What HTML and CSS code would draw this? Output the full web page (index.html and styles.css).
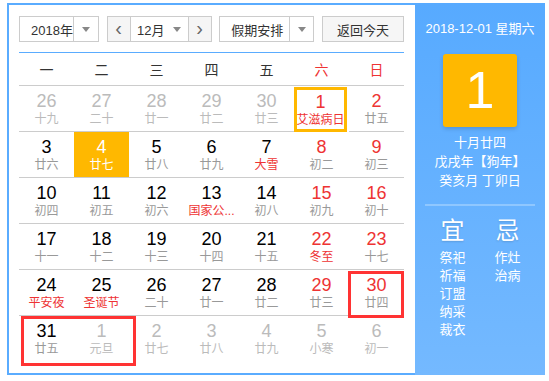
FILE: index.html
```html
<!DOCTYPE html>
<html lang="zh-CN">
<head>
    <meta charset="UTF-8">
    <title>万年历</title>
    <link rel="stylesheet" href="styles.css">
</head>
<body>
    <div class="calendar">
        <div class="main">
            <!-- Toolbar -->
            <div class="toolbar">
                <div class="select year">
                    <span class="label">2018年</span>
                    <span class="arrow"><i class="caret"></i></span>
                </div>
                <div class="month-group">
                    <span class="nav">&lsaquo;</span>
                    <span class="month">12月 <i class="caret"></i></span>
                    <span class="nav">&rsaquo;</span>
                </div>
                <div class="select holiday">
                    <span class="label">假期安排</span>
                    <span class="arrow"><i class="caret"></i></span>
                </div>
                <button class="today-btn">返回今天</button>
            </div>

            <!-- Week header -->
            <div class="week">
                <span>一</span><span>二</span><span>三</span><span>四</span><span>五</span>
                <span class="red">六</span><span class="red">日</span>
            </div>

            <!-- Days -->
            <div class="days">
                <div class="day other"><b>26</b><em>十九</em></div>
                <div class="day other"><b>27</b><em>二十</em></div>
                <div class="day other"><b>28</b><em>廿一</em></div>
                <div class="day other"><b>29</b><em>廿二</em></div>
                <div class="day other"><b>30</b><em>廿三</em></div>
                <div class="day weekend selected"><b>1</b><em class="fest">艾滋病日</em></div>
                <div class="day weekend"><b>2</b><em>廿五</em></div>

                <div class="day"><b>3</b><em>廿六</em></div>
                <div class="day today"><b>4</b><em>廿七</em></div>
                <div class="day"><b>5</b><em>廿八</em></div>
                <div class="day"><b>6</b><em>廿九</em></div>
                <div class="day"><b>7</b><em class="fest">大雪</em></div>
                <div class="day weekend"><b>8</b><em>初二</em></div>
                <div class="day weekend"><b>9</b><em>初三</em></div>

                <div class="day"><b>10</b><em>初四</em></div>
                <div class="day"><b>11</b><em>初五</em></div>
                <div class="day"><b>12</b><em>初六</em></div>
                <div class="day"><b>13</b><em class="fest" title="国家公祭日">国家公...</em></div>
                <div class="day"><b>14</b><em>初八</em></div>
                <div class="day weekend"><b>15</b><em>初九</em></div>
                <div class="day weekend"><b>16</b><em>初十</em></div>

                <div class="day"><b>17</b><em>十一</em></div>
                <div class="day"><b>18</b><em>十二</em></div>
                <div class="day"><b>19</b><em>十三</em></div>
                <div class="day"><b>20</b><em>十四</em></div>
                <div class="day"><b>21</b><em>十五</em></div>
                <div class="day weekend"><b>22</b><em class="fest">冬至</em></div>
                <div class="day weekend"><b>23</b><em>十七</em></div>

                <div class="day"><b>24</b><em class="fest">平安夜</em></div>
                <div class="day"><b>25</b><em class="fest">圣诞节</em></div>
                <div class="day"><b>26</b><em>二十</em></div>
                <div class="day"><b>27</b><em>廿一</em></div>
                <div class="day"><b>28</b><em>廿二</em></div>
                <div class="day weekend"><b>29</b><em>廿三</em></div>
                <div class="day weekend"><b>30</b><em>廿四</em></div>

                <div class="day last"><b>31</b><em>廿五</em></div>
                <div class="day last other"><b>1</b><em>元旦</em></div>
                <div class="day last other"><b>2</b><em>廿七</em></div>
                <div class="day last other"><b>3</b><em>廿八</em></div>
                <div class="day last other"><b>4</b><em>廿九</em></div>
                <div class="day last other"><b>5</b><em>小寒</em></div>
                <div class="day last other"><b>6</b><em>初一</em></div>
            </div>
        </div>

        <!-- Side panel -->
        <div class="side">
            <div class="side-date">2018-12-01 星期六</div>
            <div class="big-day">1</div>
            <div class="lunar">
                <p>十月廿四</p>
                <p>戊戌年【狗年】</p>
                <p>癸亥月 丁卯日</p>
            </div>
            <div class="divider"></div>
            <div class="almanac">
                <div class="col">
                    <h3>宜</h3>
                    <p>祭祀</p><p>祈福</p><p>订盟</p><p>纳采</p><p>裁衣</p>
                </div>
                <div class="col">
                    <h3>忌</h3>
                    <p>作灶</p><p>治病</p>
                </div>
            </div>
        </div>

        <!-- Red marks drawn over the grid -->
        <div class="mark mark-a"></div>
        <div class="mark mark-b"></div>
    </div>
</body>
</html>
```

FILE: styles.css
```css
* {
    box-sizing: border-box;
    margin: 0;
    padding: 0;
}

body {
    font-family: "Liberation Sans", "Noto Sans CJK SC", sans-serif;
    background: #fff;
    color: #333;
}

.calendar {
    position: relative;
    display: flex;
    width: 538px;
    height: 372px;
    margin: 3px 0 0 7px;
}

/* Left part */
.main {
    width: 408px;
    border: 2px solid #5aacff;
    border-right: none;
    padding: 11px 11px 0 10px;
}

.toolbar {
    display: flex;
    justify-content: space-between;
    height: 26px;
    margin-bottom: 10px;
    font-size: 13px;
}

.select {
    display: flex;
    border: 1px solid #ccc;
    background: #fff;
}

.select .label {
    display: flex;
    align-items: center;
    padding-left: 11px;
    border-right: 1px solid #ccc;
}

.select .arrow {
    display: flex;
    align-items: center;
    justify-content: center;
    width: 24px;
}

.year { width: 80px; }
.year .label { width: 55px; }

.holiday { width: 95px; }
.holiday .label { width: 71px; }

.caret {
    display: inline-block;
    width: 0;
    height: 0;
    border-left: 4px solid transparent;
    border-right: 4px solid transparent;
    border-top: 5px solid #888;
}

.month-group {
    display: flex;
    width: 105px;
    border: 1px solid #ccc;
}

.month-group .nav {
    display: flex;
    align-items: center;
    justify-content: center;
    width: 22px;
    background: #f5f5f5;
    color: #666;
    font-size: 20px;
    line-height: 1;
    padding-bottom: 3px;
}

.month-group .month {
    display: flex;
    align-items: center;
    justify-content: center;
    gap: 9px;
    width: 59px;
    border-left: 1px solid #ccc;
    border-right: 1px solid #ccc;
}

.today-btn {
    width: 82px;
    border: 1px solid #ccc;
    background: #f6f6f6;
    font-family: inherit;
    font-size: 13px;
    color: #333;
}

.week {
    display: grid;
    grid-template-columns: repeat(7, 55px);
    height: 34px;
    border-top: 1px solid #5aacff;
    border-bottom: 1px solid #ccc;
    font-size: 14px;
    color: #333;
}

.week span {
    display: flex;
    align-items: center;
    justify-content: center;
}

.week .red { color: #e33; }

.days {
    display: grid;
    grid-template-columns: repeat(7, 55px);
}

.day {
    display: flex;
    flex-direction: column;
    align-items: center;
    height: 46px;
    padding-top: 5px;
    border-bottom: 1px solid #ccc;
}

.day.last { border-bottom: none; }

.day b {
    font-weight: normal;
    font-size: 18px;
    line-height: 20px;
    color: #000;
}

.day em {
    font-style: normal;
    font-size: 12px;
    line-height: 16px;
    color: #999;
    white-space: nowrap;
}

.day.weekend b { color: #e33; }
.day em.fest { color: #e33; }

.day.other b { color: #bbb; }
.day.other em { color: #bbb; }

.day.today { background: #ffb800; }
.day.today b,
.day.today em { color: #fff; }

.day.selected {
    outline: 3px solid #ffb800;
    outline-offset: -3px;
    margin-right: 2px;
    height: 45px;
    margin-top: 1px;
}

/* Right panel */
.side {
    width: 130px;
    background: linear-gradient(#57aaff, #74b9ff);
    color: #fff;
    text-align: center;
    padding-top: 16px;
}

.side-date {
    font-size: 13px;
    line-height: 20px;
}

.big-day {
    width: 74px;
    height: 73px;
    margin: 15px auto 0;
    background: #ffb800;
    border-radius: 3px;
    box-shadow: 0 2px 4px rgba(0, 0, 0, 0.15);
    font-size: 52px;
    line-height: 73px;
}

.lunar {
    margin-top: 6px;
    font-size: 13px;
    line-height: 19px;
}

.divider {
    width: 110px;
    height: 2px;
    margin: 14px auto 0;
    background: #8fc7ff;
}

.almanac {
    display: flex;
    justify-content: center;
    gap: 15px;
    margin-top: 10px;
}

.almanac .col { width: 40px; }

.almanac h3 {
    font-weight: normal;
    font-size: 24px;
    line-height: 30px;
    margin-bottom: 3px;
    text-shadow: 0 1px 2px rgba(0, 0, 0, 0.15);
}

.almanac p {
    font-size: 13px;
    line-height: 18px;
}

/* Red annotation boxes */
.mark {
    position: absolute;
    border: 3px solid #f33;
}

.mark-a {
    left: 14px;
    top: 313px;
    width: 115px;
    height: 50px;
}

.mark-b {
    left: 341px;
    top: 268px;
    width: 56px;
    height: 47px;
}
```
